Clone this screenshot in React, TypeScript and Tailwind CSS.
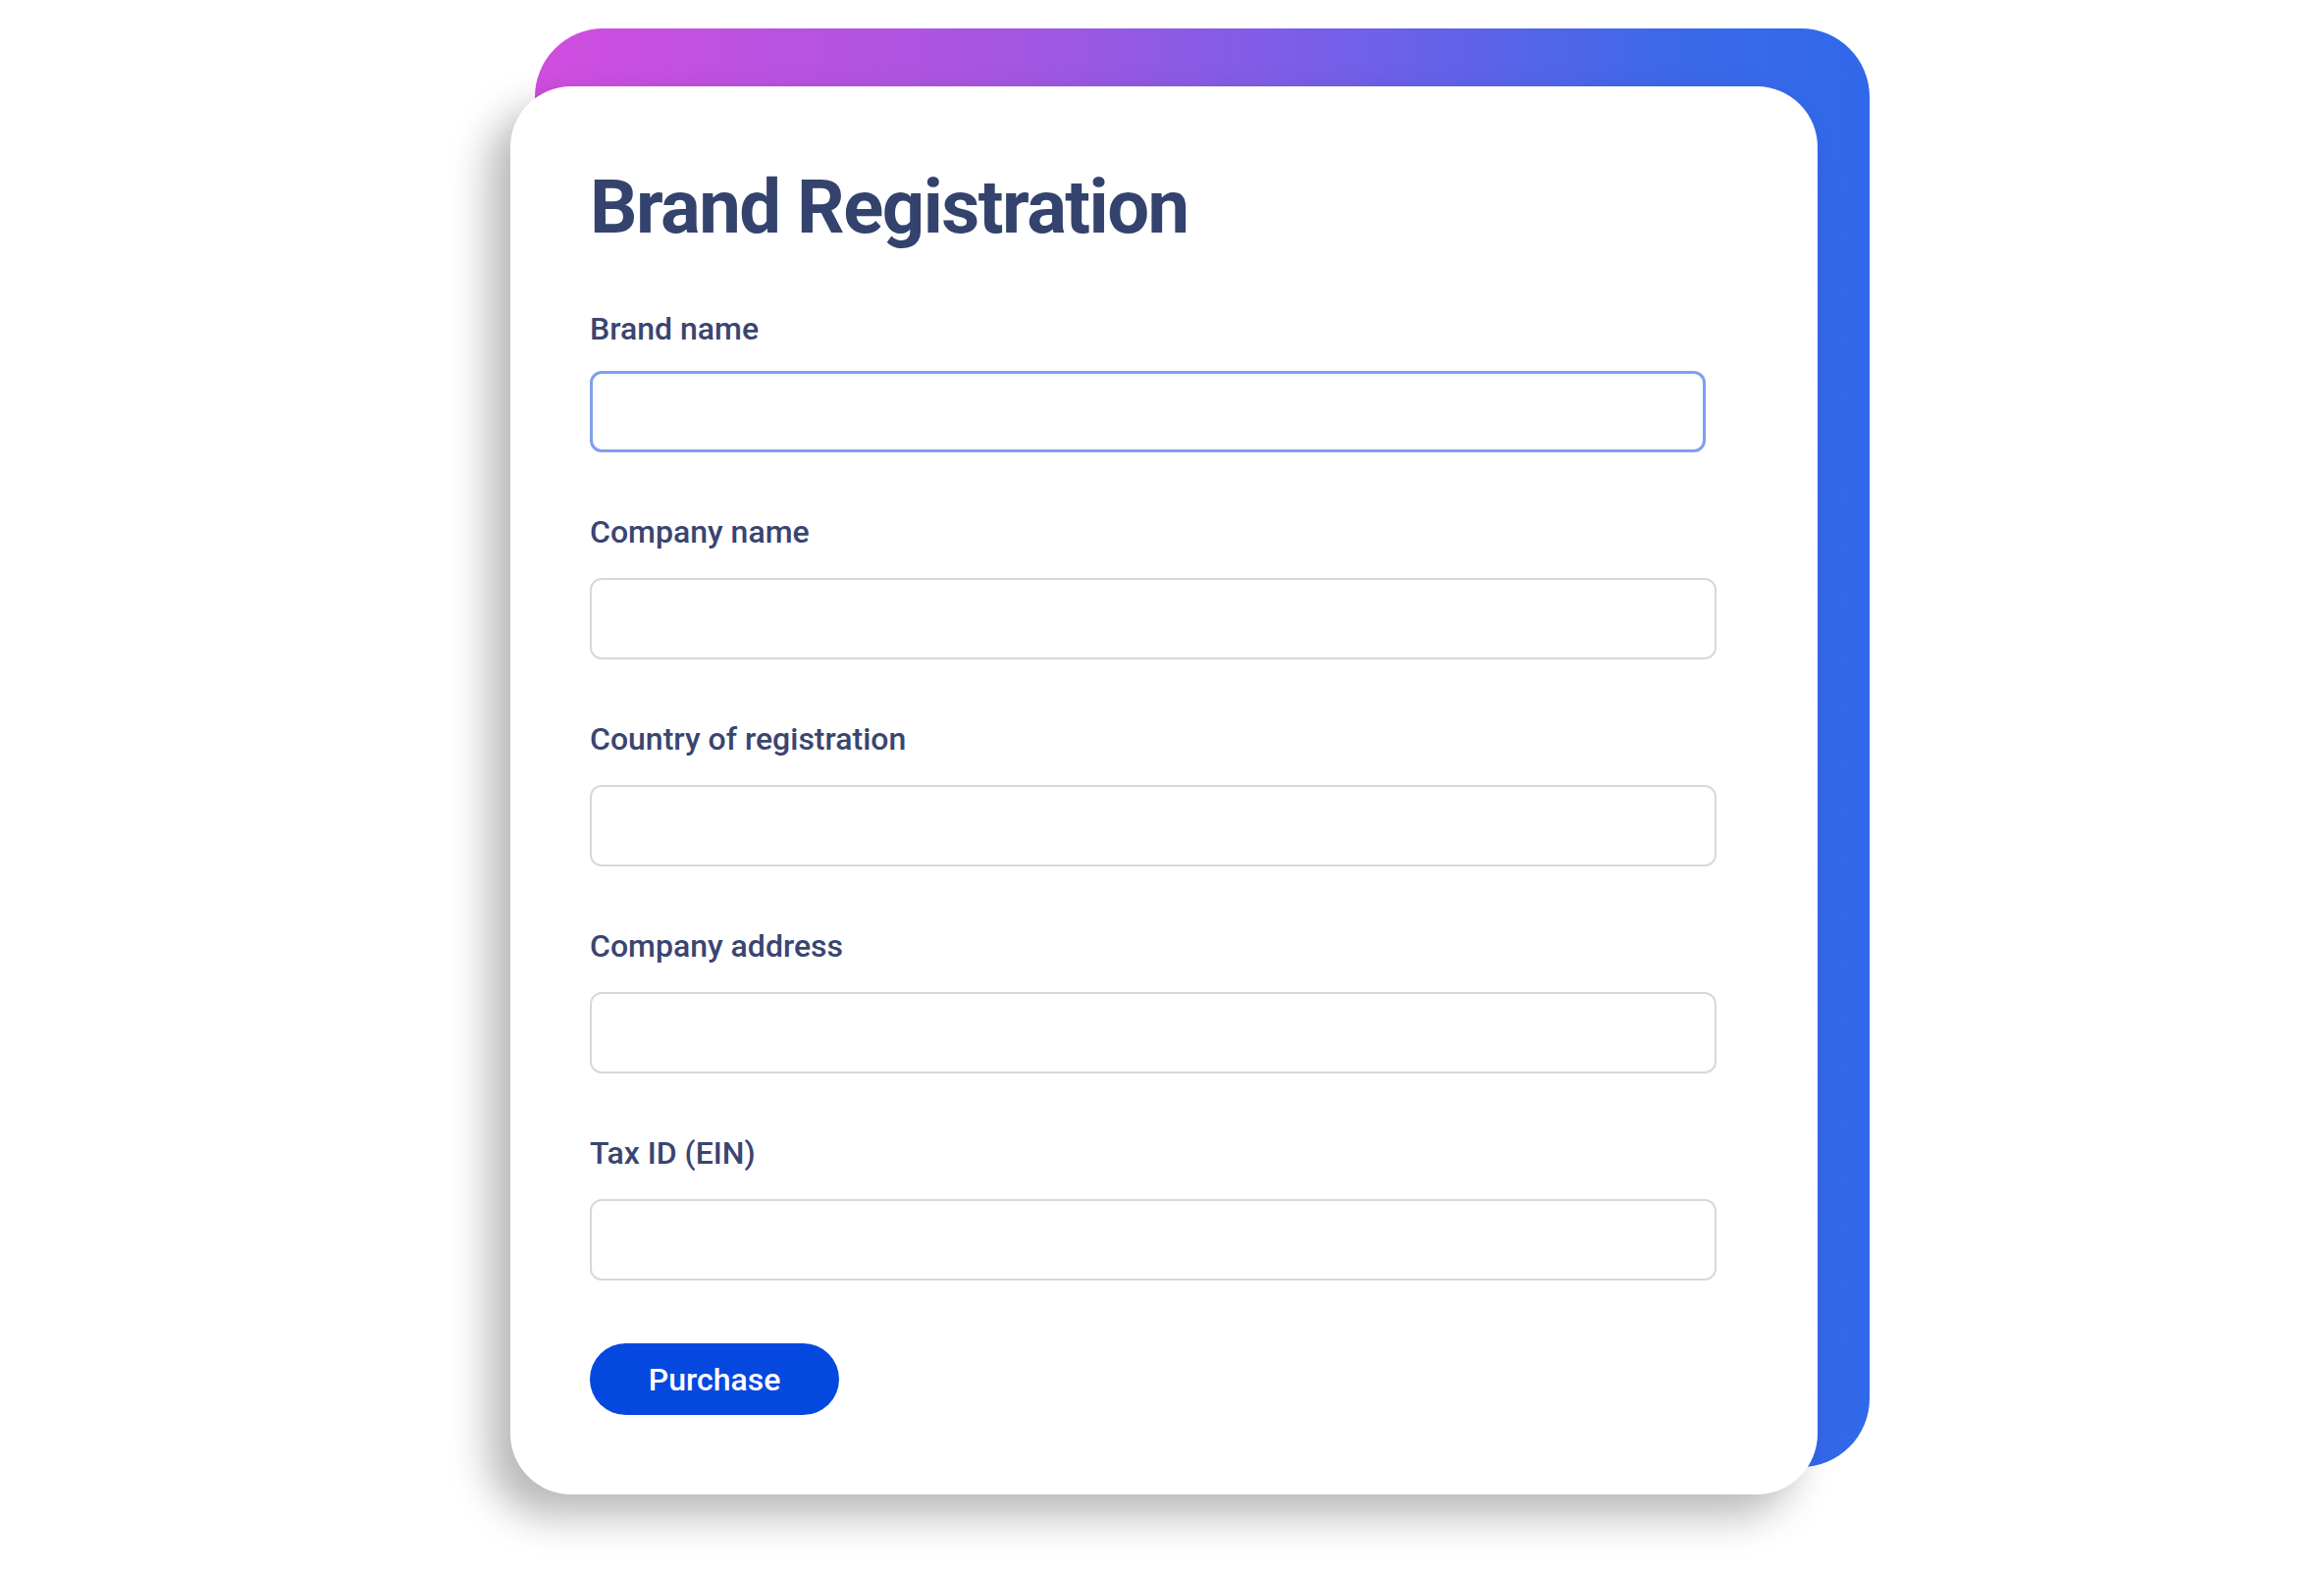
import React from 'react';

const fields = [
  { id: 'brand', label: 'Brand name', active: true },
  { id: 'company', label: 'Company name' },
  { id: 'country', label: 'Country of registration' },
  { id: 'address', label: 'Company address' },
  { id: 'tax', label: 'Tax ID (EIN)' },
];

const App: React.FC = () => {
  return (
    <div className="min-h-screen w-full bg-white pl-[545px] pt-[29px] font-['Roboto',sans-serif]">
      {/* gradient backdrop card, the form card sits offset on top of it */}
      <div className="flex w-[1360px] flex-col rounded-[70px] pt-[59px] bg-[linear-gradient(90deg,#d04ee0_0%,#a656e2_35%,#765fe8_60%,#3d69ea_85%,#3068ea_100%)]">
        <div className="-ml-[25px] -mb-[28px] w-[1332px] rounded-[62px] bg-white pl-[81px] pt-[85px] pb-[81px] shadow-[-22px_22px_40px_rgba(0,0,0,0.28)]">
          <h1 className="text-[76px] font-bold leading-none text-[#33436d] tracking-[-1.5px]">
            Brand Registration
          </h1>

          <form className="mt-[70px] flex flex-col gap-[65px]" onSubmit={e => e.preventDefault()}>
            {fields.map(f => (
              <div key={f.id} className={f.active ? 'flex flex-col gap-[27px]' : 'flex flex-col gap-[31px]'}>
                <label htmlFor={f.id} className="text-[32px] font-medium leading-none text-[#3a4571]">
                  {f.label}
                </label>
                <input
                  id={f.id}
                  type="text"
                  className={
                    f.active
                      ? 'h-[83px] w-[1137px] rounded-[12px] border-[3px] border-[#7f9ff0] bg-white px-5 text-[30px] outline-none'
                      : 'h-[83px] w-[1148px] rounded-[12px] border-2 border-[#d6d8dc] bg-white px-5 text-[30px] outline-none'
                  }
                />
              </div>
            ))}
          </form>

          <button
            type="button"
            className="mt-[64px] flex h-[73px] w-[254px] items-center justify-center rounded-full bg-[#0548e0] text-[32px] font-medium text-white"
          >
            Purchase
          </button>
        </div>
      </div>
    </div>
  );
};

export default App;
